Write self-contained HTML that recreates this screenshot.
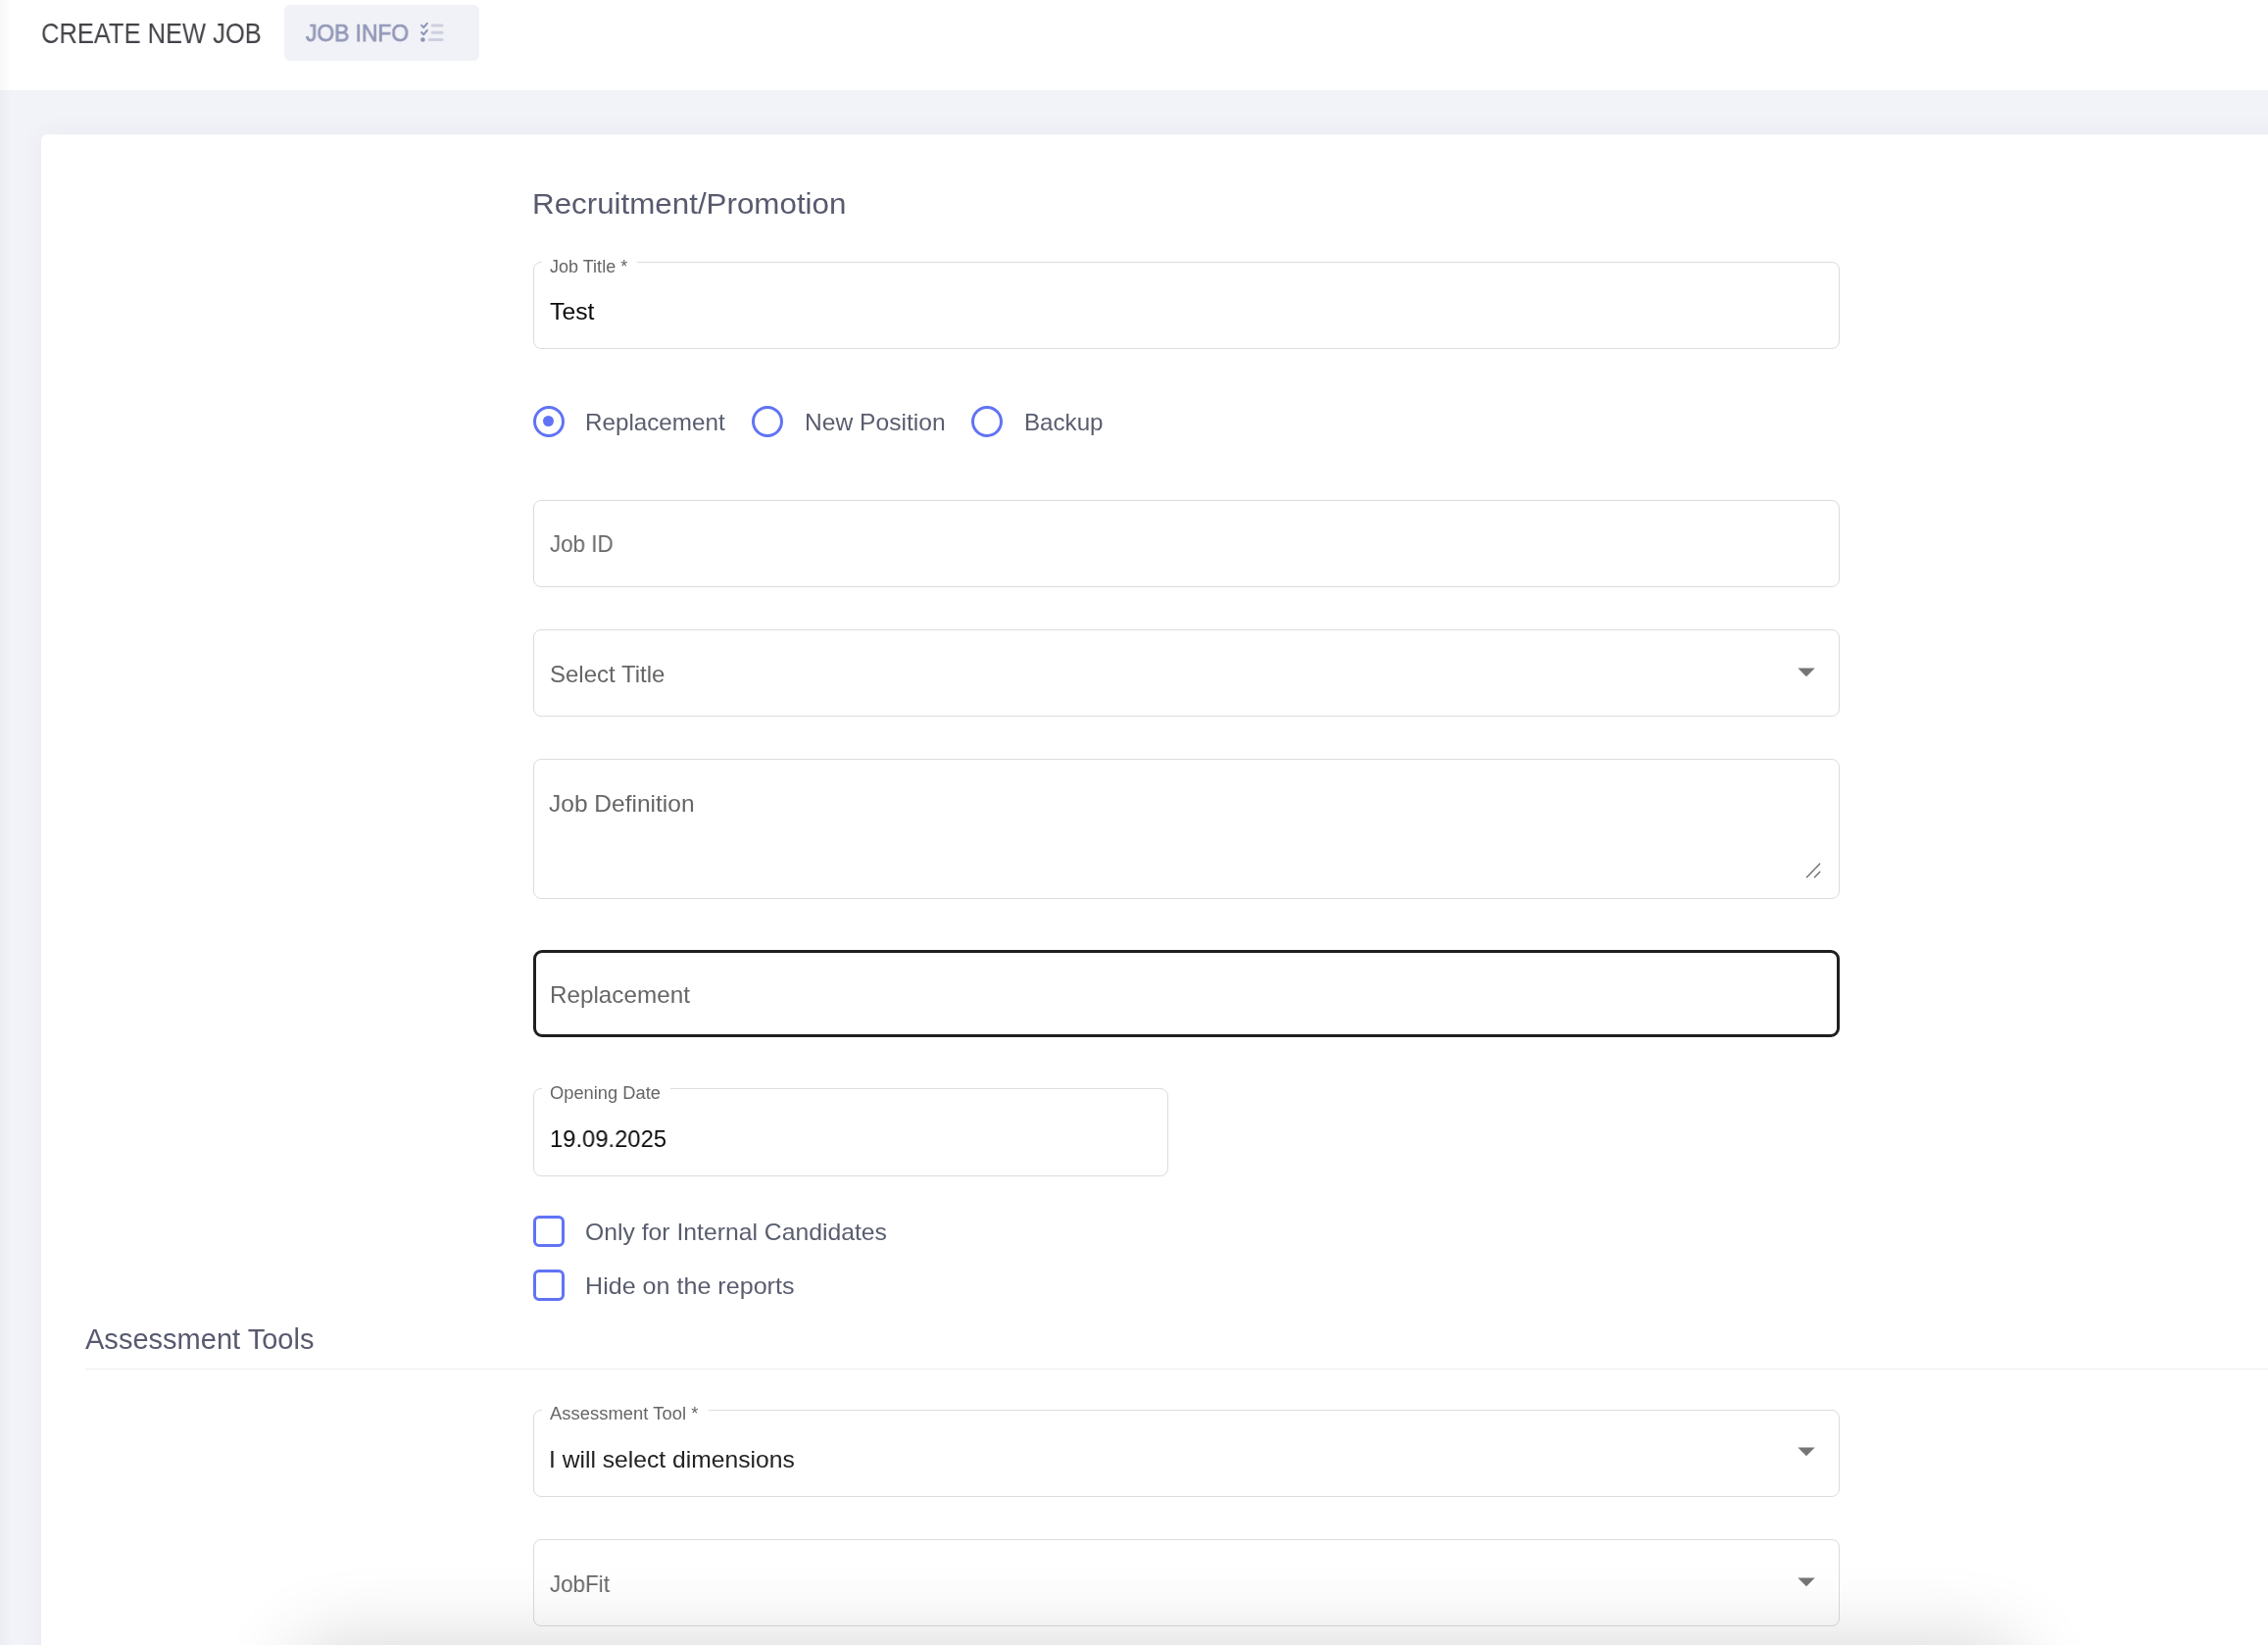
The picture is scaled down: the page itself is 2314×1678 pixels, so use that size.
<!DOCTYPE html>
<html lang="en">
<head>
<meta charset="utf-8">
<title>Create New Job</title>
<style>
*{box-sizing:border-box;margin:0;padding:0}
html,body{width:2314px;height:1678px;overflow:hidden}
body{position:relative;background:#f2f3f8;font-family:"Liberation Sans",sans-serif;color:#53556b}
.abs{position:absolute}
.t{position:absolute;white-space:nowrap;line-height:1;font-weight:400;transform-origin:0 50%;will-change:transform}
/* header */
#hdr{left:0;top:0;width:2314px;height:92px;background:#fff}
#btn{left:290px;top:5px;width:199px;height:57px;border-radius:6px;background:#f1f2f7}
/* card */
#card{left:42px;top:137px;width:2400px;height:1700px;border-radius:7px;background:#fff;box-shadow:0 0 26px 0 rgba(82,63,105,.05)}
/* outlined fields */
.f{position:absolute;left:544px;width:1333px;height:89px;border:1px solid #dcdcdc;border-radius:8px;background:transparent}
.notch{position:absolute;height:3px;background:#fff}
.lbl{font-size:18px;color:#666}
.ph{font-size:24px;color:#666}
.val{font-size:24px;color:#0a0a0a}
.rl{font-size:24px;color:#595d6e}
.radio{position:absolute;width:32px;height:32px;border-radius:50%;border:3px solid #6073f5;background:#fff}
.radio i{position:absolute;left:7px;top:7.2px;width:11px;height:10.8px;border-radius:50%;background:#6073f5}
.chk{position:absolute;width:32px;height:32px;border-radius:6px;border:3px solid #6073f5;background:#fff}
</style>
</head>
<body>

<!-- header -->
<div id="hdr" class="abs"></div>
<div id="btn" class="abs"></div>
<div id="t1" class="t" style="transform:scaleX(0.8672);left:42px;top:19px;font-size:29.4px;color:#434349">CREATE NEW JOB</div>
<div id="t2" class="t" style="transform:scaleX(0.9492);left:312px;top:22px;font-size:24px;font-weight:400;-webkit-text-stroke:0.75px #9398b8;color:#9398b8">JOB INFO</div>
<svg class="abs" style="left:426px;top:20px" width="30" height="26" viewBox="426 20 30 26">
  <path d="M430.1 25.8 L432.2 28.1 L435.8 23.8" fill="none" stroke="#8f94b8" stroke-width="2" stroke-linecap="round" stroke-linejoin="round"/>
  <path d="M430.1 33 L432.2 35.3 L435.8 31" fill="none" stroke="#8f94b8" stroke-width="2" stroke-linecap="round" stroke-linejoin="round"/>
  <circle cx="431.4" cy="40.5" r="2.3" fill="#8f94b8"/>
  <path d="M441.2 25.9 H451" stroke="#cdd0df" stroke-width="3" stroke-linecap="round"/>
  <path d="M441.2 33.2 H451" stroke="#cdd0df" stroke-width="3" stroke-linecap="round"/>
  <path d="M438.3 40.5 H451" stroke="#cdd0df" stroke-width="3" stroke-linecap="round"/>
</svg>

<!-- card -->
<div id="card" class="abs"></div>

<div id="t3" class="t" style="transform:scaleX(1.0804);left:543px;top:194px;font-size:29px;color:#585a6e">Recruitment/Promotion</div>

<!-- Job Title -->
<div class="f" style="top:267px"></div>
<div class="notch" style="left:553px;top:266px;width:97px"></div>
<div id="t4" class="t lbl" style="transform:scaleX(1.0020);left:561px;top:263px">Job Title *</div>
<div id="t5" class="t val" style="transform:scaleX(1.0317);left:561px;top:306px">Test</div>

<!-- radios -->
<div class="radio" style="left:544px;top:414px"><i></i></div>
<div id="t6" class="t rl" style="transform:scaleX(1.0087);left:597px;top:419px">Replacement</div>
<div class="radio" style="left:767.4px;top:414px"></div>
<div id="t7" class="t rl" style="transform:scaleX(1.0251);left:821px;top:419px">New Position</div>
<div class="radio" style="left:991.4px;top:414px"></div>
<div id="t8" class="t rl" style="transform:scaleX(1.0054);left:1045px;top:419px">Backup</div>

<!-- Job ID -->
<div class="f" style="top:510px"></div>
<div id="t9" class="t ph" style="transform:scaleX(0.9325);left:561px;top:543px">Job ID</div>

<!-- Select Title -->
<div class="f" style="top:642px"></div>
<div id="t10" class="t ph" style="transform:scaleX(0.9998);left:561px;top:676px">Select Title</div>
<svg class="abs" style="left:1830px;top:679px" width="26" height="14"><polygon points="4.3,2.6 21.7,2.6 13,11.3" fill="#757575"/></svg>

<!-- Job Definition -->
<div class="f" style="top:774px;height:143px"></div>
<div id="t11" class="t ph" style="transform:scaleX(1.0214);left:560px;top:808px">Job Definition</div>
<svg class="abs" style="left:1838px;top:876px" width="24" height="24" viewBox="1838 876 24 24">
  <path d="M1843 895.2 L1857.1 880.8 M1851 895.2 L1857.1 889" fill="none" stroke="#6b6b6b" stroke-width="1.3"/>
</svg>

<!-- Replacement (hover) -->
<div class="f" style="top:969px;border:3px solid #1f1f1f;border-radius:9px"></div>
<div id="t12" class="t ph" style="transform:scaleX(1.0104);left:561px;top:1003px">Replacement</div>

<!-- Opening Date -->
<div class="f" style="top:1110px;width:648px;height:90px"></div>
<div class="notch" style="left:553px;top:1109px;width:131px"></div>
<div id="t13" class="t lbl" style="transform:scaleX(1.0163);left:561px;top:1106px">Opening Date</div>
<div id="t14" class="t val" style="transform:scaleX(0.9910);left:561px;top:1150px">19.09.2025</div>

<!-- checkboxes -->
<div class="chk" style="left:544px;top:1240px"></div>
<div id="t15" class="t rl" style="transform:scaleX(1.0306);left:597px;top:1245px">Only for Internal Candidates</div>
<div class="chk" style="left:544px;top:1295px"></div>
<div id="t16" class="t rl" style="transform:scaleX(1.0459);left:597px;top:1300px">Hide on the reports</div>

<!-- Assessment Tools -->
<div id="t17" class="t" style="transform:scaleX(1.0012);left:87px;top:1352px;font-size:29px;color:#585a6e">Assessment Tools</div>
<div class="abs" style="left:87px;top:1396px;width:2300px;height:1px;background:#ebedf2"></div>

<div class="f" style="top:1438px"></div>
<div class="notch" style="left:553px;top:1437px;width:170px"></div>
<div id="t18" class="t lbl" style="transform:scaleX(1.0244);left:561px;top:1433px">Assessment Tool *</div>
<div id="t19" class="t val" style="transform:scaleX(1.0272);left:560px;top:1477px;color:#222">I will select dimensions</div>
<svg class="abs" style="left:1830px;top:1474px" width="26" height="14"><polygon points="4.3,2.6 21.7,2.6 13,11.3" fill="#757575"/></svg>

<div class="f" style="top:1570px"></div>
<div id="t20" class="t ph" style="transform:scaleX(0.9324);left:561px;top:1604px">JobFit</div>
<svg class="abs" style="left:1830px;top:1607px" width="26" height="14"><polygon points="4.3,2.6 21.7,2.6 13,11.3" fill="#757575"/></svg>

<!-- overlays -->
<div class="abs" style="left:0;top:0;width:12px;height:1678px;background:linear-gradient(to right,rgba(0,0,0,.026),rgba(0,0,0,0))"></div>
<div class="abs" style="left:360px;top:1735px;width:1642px;height:200px;border-radius:10px;box-shadow:0 0 80px 60px rgba(0,0,0,.16)"></div>

</body>
</html>
